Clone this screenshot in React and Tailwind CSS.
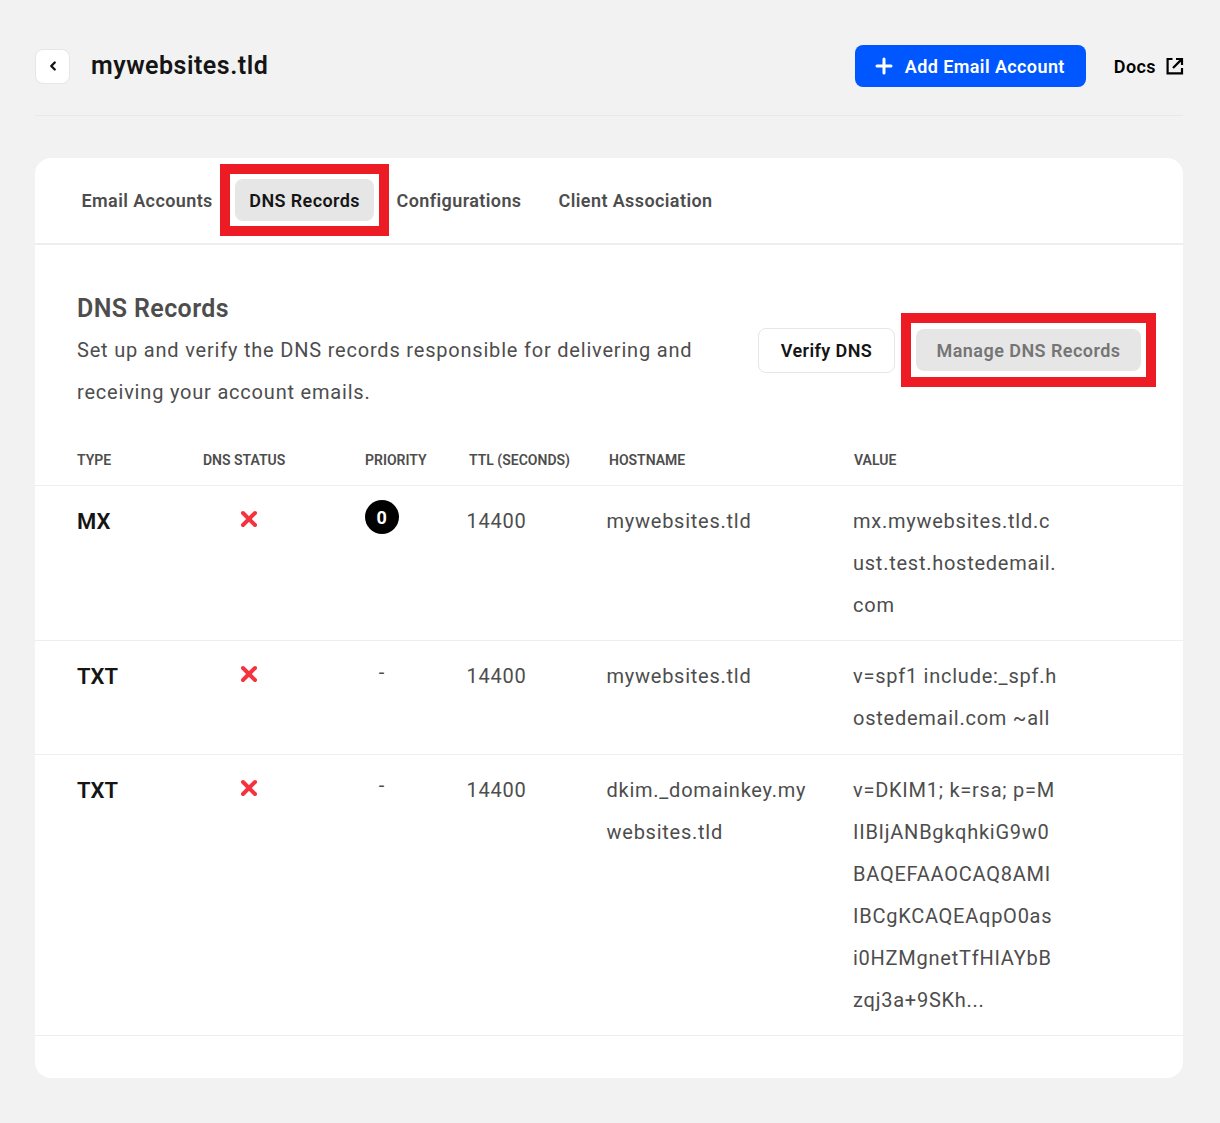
import React from "react";
import { ChevronLeft, Plus, X } from "lucide-react";

const rows = [
  {
    type: "MX",
    priority: "0",
    ttl: "14400",
    hostname: "mywebsites.tld",
    value: ["mx.mywebsites.tld.c", "ust.test.hostedemail.", "com"],
  },
  {
    type: "TXT",
    priority: "-",
    ttl: "14400",
    hostname: "mywebsites.tld",
    value: ["v=spf1 include:_spf.h", "ostedemail.com ~all"],
  },
  {
    type: "TXT",
    priority: "-",
    ttl: "14400",
    hostname: "dkim._domainkey.mywebsites.tld",
    value: [
      "v=DKIM1; k=rsa; p=M",
      "IIBIjANBgkqhkiG9w0",
      "BAQEFAAOCAQ8AMI",
      "IBCgKCAQEAqpO0as",
      "i0HZMgnetTfHIAYbB",
      "zqj3a+9SKh...",
    ],
  },
];

const gridCols = "grid grid-cols-[168px_162px_101.5px_140px_246.5px_1fr]";

function Highlight({ className }) {
  return <span className={`pointer-events-none absolute border-[10px] border-[#ed1c24] ${className}`} />;
}

function ExternalIcon() {
  return (
    <svg viewBox="0 0 18 18" className="h-[18px] w-[18px]" fill="none" stroke="currentColor" strokeWidth="2.2">
      <path d="M6.5 2H1.6V16.4H16V11" />
      <path d="M7 11 15.6 2.4" />
      <path d="M10 2H16V8" />
    </svg>
  );
}

export default function App() {
  return (
    <div className="min-h-[1123px] bg-[#f2f2f2] pl-[35px] pr-[37px] pt-[45px] font-['Roboto',sans-serif] text-[#4d4d4d]">
      <header className="flex items-center justify-between border-b border-[#e8e8e8] pb-[28px]">
        <div className="flex items-center gap-[21px]">
          <button className="flex h-[35px] w-[35px] items-center justify-center rounded-lg border border-[#e6e6e6] bg-white text-[#111]">
            <ChevronLeft className="h-[14px] w-[14px]" strokeWidth={4} />
          </button>
          <h1 className="text-[25px] font-semibold leading-[42px] tracking-[0.5px] text-[#151515]">mywebsites.tld</h1>
        </div>
        <div className="-mr-px flex items-center">
          <button className="flex h-[42px] w-[231px] items-center rounded-lg bg-[#0057ff] pl-[17px] text-[18px] font-semibold tracking-[0.4px] text-white">
            <Plus className="mr-[9px] h-[24px] w-[24px]" strokeWidth={3} />
            Add Email Account
          </button>
          <a className="ml-[28px] flex items-center gap-[10px] text-[18px] font-semibold tracking-[0.4px] text-black">
            Docs
            <ExternalIcon />
          </a>
        </div>
      </header>

      <main className="mt-[42px] h-[920px] rounded-2xl bg-white">
        <nav className="flex h-[87px] items-center border-b-2 border-[#eeeeee] pb-px pl-[46.5px] text-[18px] font-semibold tracking-[0.4px]">
          <a className="pt-px">Email Accounts</a>
          <a className="relative ml-[22px] flex h-[42px] items-center rounded-lg bg-[#e6e6e6] px-[14.5px] pt-px text-[#151515]">
            DNS Records
            <Highlight className="-inset-x-[15px] -inset-y-[15px]" />
          </a>
          <a className="ml-[22px] pt-px">Configurations</a>
          <a className="ml-[37px] pt-px">Client Association</a>
        </nav>

        <section className="flex items-center pl-[42px] pr-[42px] pt-[43px]">
          <div className="w-[681px]">
            <h2 className="-mb-px text-[25px] font-semibold leading-[42px] tracking-[0.4px]">DNS Records</h2>
            <p className="w-[640px] text-[20px] leading-[42px] tracking-[0.8px]">
              Set up and verify the DNS records responsible for delivering and receiving your account emails.
            </p>
          </div>
          <button className="flex h-[45px] w-[137px] items-center justify-center rounded-lg border border-[#e6e6e6] text-[18px] font-semibold tracking-[0.4px] text-[#151515]">
            Verify DNS
          </button>
          <button className="relative mb-[2px] ml-[21px] flex h-[42px] w-[225px] items-center justify-center rounded-lg bg-[#e6e6e6] pt-[2px] text-[18px] font-semibold tracking-[0.45px] text-[#757575]">
            Manage DNS Records
            <Highlight className="-inset-x-[15px] -inset-y-[16px]" />
          </button>
        </section>

        <div className="mt-[26px]">
          <div className={`${gridCols} h-[47px] items-center border-b border-[#eeeeee] pb-[4px] text-[14px] font-semibold uppercase`}>
            <span className="pl-[42px]">Type</span>
            <span>DNS Status</span>
            <span>Priority</span>
            <span className="pl-[2.5px]">TTL (Seconds)</span>
            <span className="pl-[2.5px]">Hostname</span>
            <span className="pl-[1px]">Value</span>
          </div>
          {rows.map((row, i) => (
            <div key={i} className={`${gridCols} border-b border-[#eeeeee] pb-[14.4px] pt-[14px] text-[20px] leading-[42px] tracking-[0.75px]`}>
              <span className="pl-[42px] pt-px text-[22px] font-semibold tracking-normal text-[#151515]">{row.type}</span>
              <span className="pl-[34px] pt-[7px]">
                <X className="h-[24px] w-[24px] text-[#f5333f]" strokeWidth={4} />
              </span>
              <span className="w-[34px] text-center">
                {row.priority === "0" ? (
                  <span className="flex h-[34px] w-[34px] items-center justify-center rounded-full bg-black pt-px text-[18px] font-bold leading-none text-white">
                    0
                  </span>
                ) : (
                  <span className="-mt-[4.6px] block leading-[42px]">-</span>
                )}
              </span>
              <span>{row.ttl}</span>
              <span className="w-[206px] break-all">{row.hostname}</span>
              <span>
                {row.value.map((line) => (
                  <span key={line} className="block">{line}</span>
                ))}
              </span>
            </div>
          ))}
        </div>
      </main>
    </div>
  );
}
